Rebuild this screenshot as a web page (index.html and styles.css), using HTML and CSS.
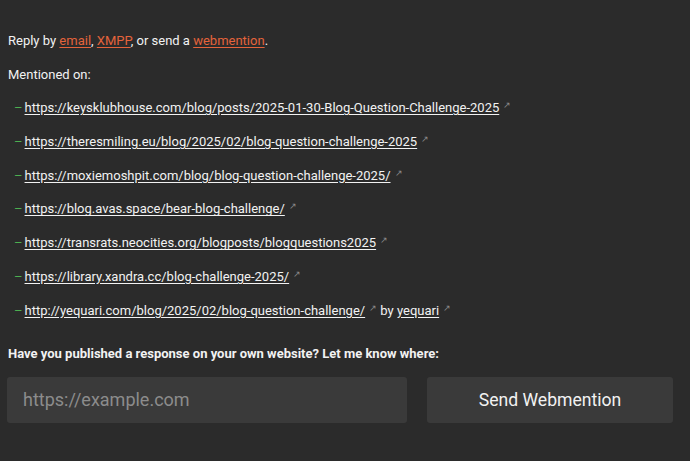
FILE: index.html
```html
<!DOCTYPE html>
<html lang="en">
<head>
    <meta charset="UTF-8">
    <meta name="viewport" content="width=device-width, initial-scale=1.0">
    <title>Webmentions</title>
    <link rel="stylesheet" href="styles.css">
</head>
<body>
<section class="replies">
    <p class="reply">Reply by <a class="accent" href="#">email</a>, <a class="accent" href="#">XMPP</a>, or send a <a class="accent" href="#">webmention</a>.</p>

    <p class="mentioned">Mentioned on:</p>
    <ul class="mentions">
        <li><a href="#">https://keysklubhouse.com/blog/posts/2025-01-30-Blog-Question-Challenge-2025</a><span class="ext">↗</span></li>
        <li><a href="#">https://theresmiling.eu/blog/2025/02/blog-question-challenge-2025</a><span class="ext">↗</span></li>
        <li><a href="#">https://moxiemoshpit.com/blog/blog-question-challenge-2025/</a><span class="ext">↗</span></li>
        <li><a href="#">https://blog.avas.space/bear-blog-challenge/</a><span class="ext">↗</span></li>
        <li><a href="#">https://transrats.neocities.org/blogposts/blogquestions2025</a><span class="ext">↗</span></li>
        <li><a href="#">https://library.xandra.cc/blog-challenge-2025/</a><span class="ext">↗</span></li>
        <li><a href="#">http://yequari.com/blog/2025/02/blog-question-challenge/</a><span class="ext">↗</span> by <a href="#">yequari</a><span class="ext">↗</span></li>
    </ul>

    <p class="ask">Have you published a response on your own website? Let me know where:</p>
    <form class="webmention-form">
        <input type="url" name="source" placeholder="https://example.com">
        <button type="button">Send Webmention</button>
    </form>
</section>
</body>
</html>
```

FILE: styles.css
```css
body {
    background-color: #2b2b2b;
    color: #f2f2f2;
    font-family: Roboto, "Noto Sans", sans-serif;
    font-size: 13px;
    margin: 0;
    padding: 0 7px;
}

.replies {
    padding-top: 31px;
}

p {
    margin: 0;
    line-height: 20px;
}

a {
    color: #f2f2f2;
    text-decoration: underline;
    text-underline-offset: 2px;
}

a.accent {
    color: #e4633b;
}

.reply {
    padding-left: 1px;
}

.mentioned {
    margin-top: 14px;
    padding-left: 1px;
}

.mentions {
    list-style: none;
    margin: 13px 0 0;
    padding: 0;
}

.mentions li {
    line-height: 20px;
    margin-bottom: 13.8px;
    padding-left: 7px;
}

.mentions li:last-child {
    margin-bottom: 0;
}

.mentions li::before {
    content: "–";
    color: #4caf50;
    margin-right: 2px;
}

.ext {
    color: #8a8a8a;
    font-size: 9px;
    line-height: 0;
    vertical-align: 4px;
    margin-left: 4px;
}

.ask {
    font-weight: 700;
    margin-top: 23px;
    padding-left: 1px;
}

.webmention-form {
    display: flex;
    gap: 20px;
    margin-top: 13px;
    width: 666px;
}

.webmention-form input {
    flex: 1;
    height: 46px;
    box-sizing: border-box;
    background-color: #3a3a3a;
    border: none;
    border-radius: 3px;
    padding: 0 16px;
    color: #f2f2f2;
    font-family: Roboto, sans-serif;
    font-size: 18px;
}

.webmention-form input::placeholder {
    color: #8c8c8c;
}

.webmention-form button {
    width: 246px;
    height: 46px;
    background-color: #3a3a3a;
    border: none;
    border-radius: 3px;
    color: #f2f2f2;
    font-family: Roboto, sans-serif;
    font-size: 17.6px;
}
```
